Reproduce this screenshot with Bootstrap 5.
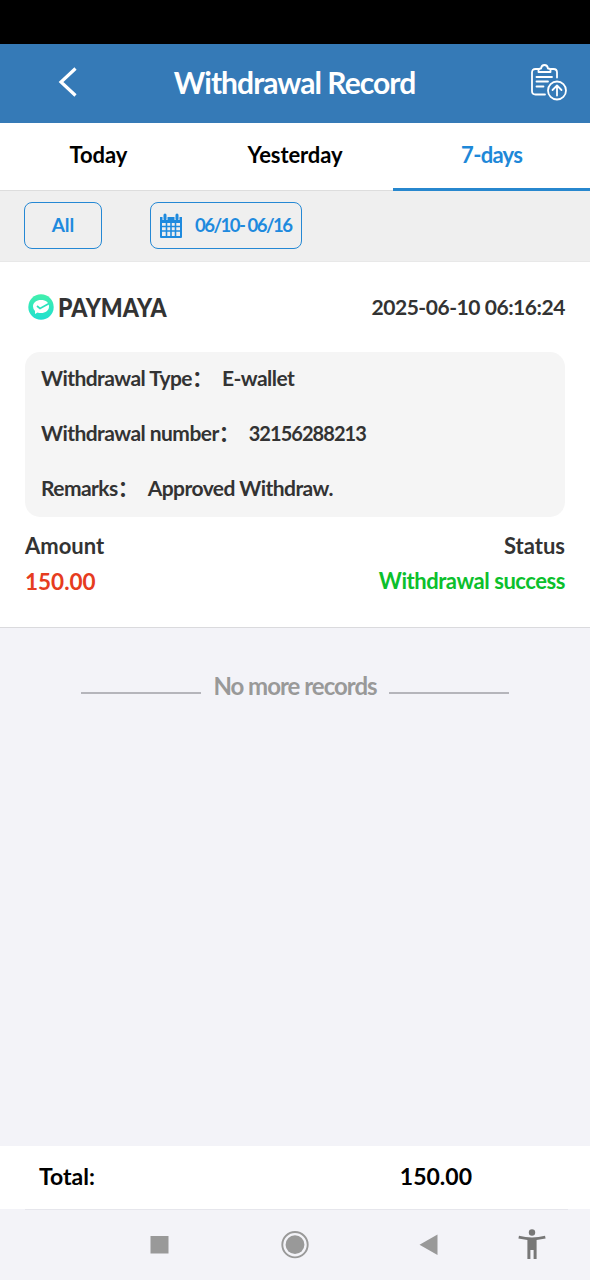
<!DOCTYPE html>
<html lang="en">
<head>
<meta charset="utf-8">
<meta name="viewport" content="width=device-width, initial-scale=1">
<title>Withdrawal Record</title>
<link href="https://cdn.jsdelivr.net/npm/bootstrap@5.3.0/dist/css/bootstrap.min.css" rel="stylesheet">
<style>
body{font-family:Lato,"Noto Sans CJK SC",sans-serif;font-weight:700;background:#f3f3f8;color:#333;height:1280px;overflow:hidden}
svg{display:block;flex:none}
.statusbar{height:44px;background:#000}
.topbar{height:79px;background:#357ab7;color:#fff;padding:0 22px 3px 58px}
.topbar h1{font-size:30px;font-weight:700;line-height:36px;margin:0 19px 1px 0;letter-spacing:-.95px}
.day-tabs{height:68px;background:#fff;border-bottom:1px solid #ddd}
.day-tabs .nav-link{color:#000;font-size:22px;line-height:30px;padding:17px 0 0;height:68px;border-radius:0;letter-spacing:-.1px}
.day-tabs .nav-link.active{color:#1e88d8;border-bottom:3px solid #2787ce;letter-spacing:-.7px}
.filters{height:71px;background:#efefef;padding:0 24px 1px;gap:48px;border-bottom:1px solid #e8e8e8}
.filters .btn{height:47px;border:1px solid #2588d4;border-radius:8px;color:#1e8ade;font-size:19px;font-weight:700;padding:0}
.filters .btn-all{width:78px}
.filters .btn-range{width:152px;padding-left:8px;gap:12px;font-size:18.5px;letter-spacing:-1.5px}
.record{height:366px;background:#fff;border-bottom:1px solid #dadadd;padding:0 25px}
.record-head{height:90px;font-size:21px}
.provider{font-size:26px;font-weight:900;gap:4px;padding-left:3px}
.provider-name{display:inline-block;transform:scaleX(.885);transform-origin:left}
.stamp{letter-spacing:-.45px}
.details{height:165px;border-radius:15px;background:#f5f5f5;padding:0 16px;font-size:21px;letter-spacing:-.55px}
.details .line{height:55px;padding-bottom:3px}
.colon{width:30px;flex:none;letter-spacing:0}
.digits{font-size:20px;letter-spacing:-.95px}
.sums{font-size:22px;line-height:30px;padding-top:14px}
.sums .val{line-height:30px;margin-top:5px}
.red{color:#e63c20;font-size:22.5px;padding-top:1px}.green{color:#0bc02c;letter-spacing:-.45px}
.no-more{padding-top:42px;color:#999;font-size:24px;line-height:32px;gap:12px;letter-spacing:-1px}
.no-more i{width:120px;height:2px;background:#b5b5bb;margin-top:14px}
.total{height:63px;background:#fff;color:#000;font-size:23px;padding:0 118px 2px 39px}
.sysnav{height:71px}
</style>
</head>
<body class="d-flex flex-column">
<div class="statusbar"></div>
<header class="topbar d-flex align-items-center justify-content-between">
  <svg width="20" height="32" viewBox="0 0 20 32" fill="none" stroke="#fff" stroke-width="3.2"><path d="M17.500 2.500 3 16l14.500 13.500"/></svg>
  <h1>Withdrawal Record</h1>
  <svg width="38" height="38" viewBox="0 0 38 38" fill="none" stroke="#fff" stroke-width="1.8" stroke-linecap="round" stroke-linejoin="round"><path d="M9 6H5.500Q2 6 2 9.500V28Q2 31.500 5.500 31.500H15M21 6h2.500Q27 6 27 9.500V14.500"/><path d="M8.500 9V7Q8.500 5.500 11 5.500 11.500 2 14.500 2T18 5.500Q20.500 5.500 20.500 7V9Z"/><path d="M6.500 14H22M6.500 18.500H18M6.500 23.500H13.500"/><circle cx="27" cy="27.500" r="9"/><path d="M27 32.500V23M22.500 27 27 22.500l4.500 4.500"/></svg>
</header>
<nav class="nav nav-fill day-tabs flex-nowrap text-center">
  <a class="nav-link col-4">Today</a>
  <a class="nav-link col-4">Yesterday</a>
  <a class="nav-link col-4 active">7-days</a>
</nav>
<section class="filters d-flex align-items-center">
  <button class="btn btn-all">All</button>
  <button class="btn btn-range d-flex align-items-center">
    <svg width="24" height="26" viewBox="0 0 24 26"><path fill="#1e8ade" fill-rule="evenodd" d="M1 4h22v20q0 1-1 1H2q-1 0-1-1ZM3 10v13h18V10Z"/><path d="M6 1v6M18 1v6" stroke="#efefef" stroke-width="5"/><path d="M6 2v4M18 2v4" stroke="#1e8ade" stroke-width="3" stroke-linecap="round"/><path d="M3 13.500h18M3 18h18M7.500 9v15M12 9v15M16.500 9v15" stroke="#1e8ade" stroke-width="1.600"/></svg>
    <span>06/10- 06/16</span>
  </button>
</section>
<main class="record">
  <div class="record-head d-flex align-items-center justify-content-between">
    <div class="provider d-flex align-items-center">
      <svg width="26" height="26" viewBox="0 0 26 26"><defs><linearGradient id="g" x2="0" y2="1"><stop stop-color="#42f0ac"/><stop offset="1" stop-color="#20dfd0"/></linearGradient></defs><circle cx="13" cy="13" r="12.700" fill="url(#g)"/><path fill="#fff" d="M13 6c5 0 8 2.500 8 6.500S17.500 19 13 19q-2 0-3.500-.5L7 20v-3q-2-2-2-4.500C5 8.500 8.500 6 13 6Z"/><path d="m9 12 3 2.500 9-5" fill="none" stroke="#2ae3bd" stroke-width="1.700"/></svg>
      <span class="provider-name">PAYMAYA</span>
    </div>
    <span class="stamp">2025-06-10 06:16:24</span>
  </div>
  <div class="details">
    <div class="line d-flex align-items-center"><span>Withdrawal Type</span><span class="colon">：</span><span>E-wallet</span></div>
    <div class="line d-flex align-items-center"><span>Withdrawal number</span><span class="colon">：</span><span class="digits">32156288213</span></div>
    <div class="line d-flex align-items-center"><span>Remarks</span><span class="colon">：</span><span>Approved Withdraw.</span></div>
  </div>
  <div class="sums d-flex justify-content-between">
    <div><div>Amount</div><div class="val red">150.00</div></div>
    <div class="text-end"><div>Status</div><div class="val green">Withdrawal success</div></div>
  </div>
</main>
<div class="no-more d-flex justify-content-center align-items-center"><i></i><span>No more records</span><i></i></div>
<footer class="mt-auto">
  <div class="total d-flex align-items-center justify-content-between"><span>Total:</span><span>150.00</span></div>
  <div class="sysnav">
    <svg width="590" height="71" viewBox="0 1209 590 71" fill="#999"><path d="M25 1209.500H568" stroke="#e6e6ec"/><path d="M150.500 1236h18v17.500h-18ZM437.500 1234.500v20.500l-18-10.300Z"/><circle cx="295" cy="1244.700" r="12.700" fill="none" stroke="#999" stroke-width="1.900"/><circle cx="295" cy="1244.700" r="9.400"/><g fill="#777"><circle cx="532" cy="1232.500" r="3.200"/><path d="m519 1235.800q13 3.200 26 0l.6 2.600-9 1.700v19h-3v-9h-3.200v9h-3v-19l-9-1.700Z"/></g></svg>
  </div>
</footer>
<script src="https://cdn.jsdelivr.net/npm/bootstrap@5.3.0/dist/js/bootstrap.bundle.min.js"></script>
</body>
</html>
